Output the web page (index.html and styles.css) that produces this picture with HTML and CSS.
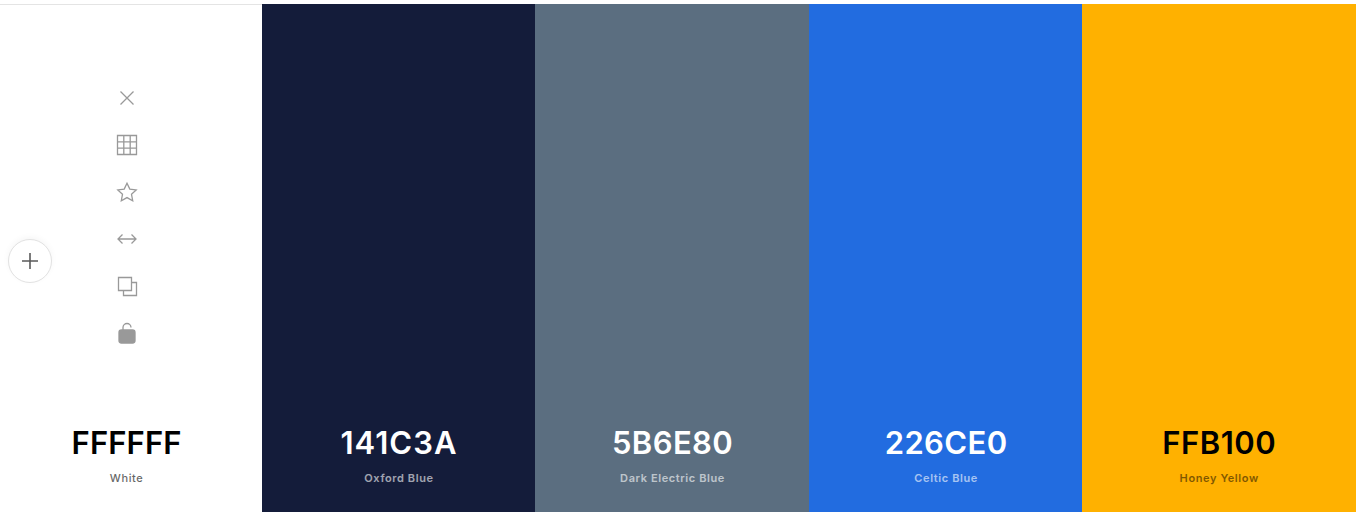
FILE: index.html
```html
<!DOCTYPE html>
<html lang="en">
<head>
    <meta charset="UTF-8">
    <meta name="viewport" content="width=device-width, initial-scale=1.0">
    <title>Color Palette</title>
    <link rel="stylesheet" href="styles.css">
</head>
<body>
    <main class="palette">
        <section class="swatch swatch-white">
            <div class="tools">
                <button type="button" class="tool" aria-label="Remove">
                    <svg viewBox="0 0 24 24"><path d="M5.500 5.500l13 13M18.500 5.500l-13 13"/></svg>
                </button>
                <button type="button" class="tool" aria-label="View shades">
                    <svg viewBox="0 0 24 24"><path d="M2.500 2.500h19v19h-19zM2.500 8.800h19M2.500 15.200h19M8.800 2.500v19M15.200 2.500v19"/></svg>
                </button>
                <button type="button" class="tool" aria-label="Save">
                    <svg viewBox="0 0 24 24"><path d="M12 3.200l2.800 5.900 6.400.8-4.700 4.400 1.200 6.400-5.700-3.100-5.700 3.100 1.200-6.400-4.700-4.400 6.400-.8z"/></svg>
                </button>
                <button type="button" class="tool" aria-label="Drag">
                    <svg viewBox="0 0 24 24"><path d="M3 12h18M7.500 7.500L3 12l4.500 4.500M16.500 7.500L21 12l-4.500 4.500"/></svg>
                </button>
                <button type="button" class="tool" aria-label="Copy">
                    <svg viewBox="0 0 24 24"><path d="M3.500 3.500h13v13h-13zM16.500 8.500h5v13h-13v-5"/></svg>
                </button>
                <button type="button" class="tool" aria-label="Lock">
                    <svg viewBox="0 0 24 24"><path d="M8 9V6.500a4 4 0 0 1 8 0"/><rect class="solid" x="4" y="9" width="16" height="13" rx="2.500"/></svg>
                </button>
            </div>
            <div class="caption">
                <h2 class="hex">FFFFFF</h2>
                <p class="name">White</p>
            </div>
            <button type="button" class="add" aria-label="Add color">
                <svg viewBox="0 0 24 24"><path d="M12 4v16M4 12h16"/></svg>
            </button>
        </section>
        <section class="swatch swatch-oxford">
            <div class="caption">
                <h2 class="hex">141C3A</h2>
                <p class="name">Oxford Blue</p>
            </div>
        </section>
        <section class="swatch swatch-electric">
            <div class="caption">
                <h2 class="hex">5B6E80</h2>
                <p class="name">Dark Electric Blue</p>
            </div>
        </section>
        <section class="swatch swatch-celtic">
            <div class="caption">
                <h2 class="hex">226CE0</h2>
                <p class="name">Celtic Blue</p>
            </div>
        </section>
        <section class="swatch swatch-honey">
            <div class="caption">
                <h2 class="hex">FFB100</h2>
                <p class="name">Honey Yellow</p>
            </div>
        </section>
    </main>
</body>
</html>
```

FILE: styles.css
```css
html, body {
    height: 100%;
}
body {
    margin: 0;
    overflow: hidden;
    background-color: #fff;
    font-family: Inter, "Liberation Sans", sans-serif;
}
.palette {
    display: flex;
    box-sizing: border-box;
    height: 512px;
    padding-top: 4px;
}
.swatch {
    position: relative;
    flex: 1 1 0;
    display: flex;
    flex-direction: column;
    align-items: center;
    justify-content: flex-end;
    padding-bottom: 26px;
    color: #fff;
}
.swatch-white {
    flex: 0 0 261.7px;
    box-sizing: border-box;
    border-top: 1px solid #e4e4e4;
    padding-right: 8.5px;
    color: #000;
}
.swatch-oxford {
    background-color: #141c3a;
}
.swatch-electric {
    background-color: #5b6e80;
}
.swatch-celtic {
    background-color: #226ce0;
}
.swatch-honey {
    background-color: #ffb100;
    color: #000;
}
.tools {
    display: flex;
    flex-direction: column;
    align-items: center;
    gap: 23px;
    margin-bottom: 79px;
}
.tool {
    width: 24px;
    height: 24px;
    padding: 0;
    border: none;
    background: none;
    cursor: pointer;
}
.tool svg {
    display: block;
    width: 24px;
    height: 24px;
    fill: none;
    stroke: #999;
    stroke-width: 1.3;
}
.tool .solid {
    fill: #999;
}
.caption {
    text-align: center;
    padding-left: 1px;
}
.swatch-white .caption, .swatch-honey .caption {
    padding-left: 0;
}
.hex {
    margin: 0;
    font-size: 31px;
    line-height: 38px;
    font-weight: 600;
    letter-spacing: 0.4px;
}
.swatch-oxford .hex {
    letter-spacing: 1px;
}
.swatch-white .hex {
    letter-spacing: 0.1px;
}
.swatch-honey .hex {
    letter-spacing: 0.5px;
}
.name {
    margin: 8px 0 0;
    font-size: 11px;
    line-height: 16px;
    font-weight: 600;
    letter-spacing: 0.6px;
    opacity: 0.6;
}
.swatch-white .name {
    font-weight: 500;
}
.swatch-honey .name {
    opacity: 0.5;
}
.add {
    position: absolute;
    top: 234px;
    left: 8px;
    width: 44px;
    height: 44px;
    padding: 0;
    display: flex;
    align-items: center;
    justify-content: center;
    border: 1px solid #e2e2e2;
    border-radius: 50%;
    background-color: #fff;
    box-shadow: 0 -2px 6px rgba(0, 0, 0, 0.04);
    cursor: pointer;
}
.add svg {
    width: 24px;
    height: 24px;
    fill: none;
    stroke: #5a5a5a;
    stroke-width: 1.6;
}
```
